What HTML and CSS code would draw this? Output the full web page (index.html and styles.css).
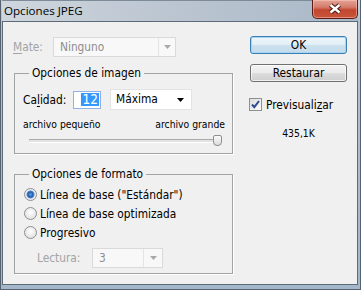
FILE: index.html
```html
<!DOCTYPE html>
<html lang="es">
<head>
    <meta charset="UTF-8">
    <title>Opciones JPEG</title>
    <link rel="stylesheet" href="styles.css">
</head>
<body>
<div class="window">
    <div class="titlebar">
        <span class="title">Opciones JPEG</span>
        <span class="close">
            <svg width="44" height="18" viewBox="0 0 44 18">
                <path d="M17.5 5 L26.5 12.5 M26.5 5 L17.5 12.5" stroke="#4b1a12" stroke-width="4.5" fill="none"/>
                <path d="M17.5 5 L26.5 12.5 M26.5 5 L17.5 12.5" stroke="#fff" stroke-width="2.4" fill="none"/>
            </svg>
        </span>
    </div>
    <div class="client">
        <div class="main">
            <div class="mate-row">
                <span class="mate-label disabled"><u>M</u>ate:</span>
                <div class="select select-off mate-select">
                    <span class="value">Ninguno</span>
                    <span class="drop">
                        <svg width="7" height="4" viewBox="0 0 7 4"><polygon points="0,0 7,0 3.5,4" fill="#a8a8a8"/></svg>
                    </span>
                </div>
            </div>

            <fieldset class="group">
                <legend>Opciones de imagen</legend>
                <div class="quality-row">
                    <span class="quality-label">Ca<u>l</u>idad:</span>
                    <span class="num-box"><span class="num-sel">12</span></span>
                    <div class="select quality-select">
                        <span class="value">Máxima</span>
                        <span class="drop">
                            <svg width="7" height="4" viewBox="0 0 7 4"><polygon points="0,0 7,0 3.5,4" fill="#000"/></svg>
                        </span>
                    </div>
                </div>
                <div class="size-labels">
                    <span>archivo pequeño</span>
                    <span>archivo grande</span>
                </div>
                <div class="slider">
                    <div class="track"></div>
                    <div class="thumb"></div>
                </div>
            </fieldset>

            <fieldset class="group format-group">
                <legend>Opciones de formato</legend>
                <div class="radio-row"><span class="radio checked"></span>Línea de base ("Estándar")</div>
                <div class="radio-row"><span class="radio"></span>Línea de base optimizada</div>
                <div class="radio-row"><span class="radio"></span>Progresivo</div>
                <div class="scan-row">
                    <span class="scan-label disabled">Lectura:</span>
                    <div class="select select-off scan-select">
                        <span class="value">3</span>
                        <span class="drop">
                            <svg width="7" height="4" viewBox="0 0 7 4"><polygon points="0,0 7,0 3.5,4" fill="#a8a8a8"/></svg>
                        </span>
                    </div>
                </div>
            </fieldset>
        </div>

        <div class="side">
            <button class="btn btn-default">OK</button>
            <button class="btn">Restaurar</button>
            <div class="check-row">
                <span class="checkbox">
                    <svg width="11" height="11" viewBox="0 0 11 11"><path d="M2 5.5 L4.3 8.2 L9 2" stroke="#2d4c8e" stroke-width="2" fill="none"/></svg>
                </span>
                <span>Previsuali<u>z</u>ar</span>
            </div>
            <div class="file-size">435,1K</div>
        </div>
    </div>
</div>
</body>
</html>
```

FILE: styles.css
```css
* {
    box-sizing: border-box;
}
body {
    margin: 0;
    font-family: "DejaVu Sans Condensed", "DejaVu Sans", sans-serif;
    font-stretch: condensed;
    font-size: 11.8px;
    color: #000;
}
u {
    text-decoration-thickness: 1px;
    text-underline-offset: 2px;
}
.window {
    width: 361px;
    height: 290px;
    display: flex;
    flex-direction: column;
    padding: 0 2px 4px 1px;
    border: 1px solid #56626f;
    border-top: 0;
    background: linear-gradient(to bottom, #c9d0d8 0, #b6c2ce 21px, #a3b6ca 100%);
}
.titlebar {
    height: 21px;
    display: flex;
    align-items: flex-start;
    background: linear-gradient(to right, #cfd6de 0, #bcc6d1 45%, #a9b8c8 100%);
    border-top: 1px solid #7d8a97;
}
.title {
    padding: 2px 0 0 2px;
    font-family: "Open Sans", "Noto Sans", sans-serif;
    font-stretch: normal;
    font-size: 11.6px;
    line-height: 16px;
}
.close {
    margin-left: auto;
    margin-top: -1px;
    width: 46px;
    height: 19px;
    display: flex;
    align-items: center;
    justify-content: center;
    border: 1px solid #5c1e14;
    border-top: 0;
    border-radius: 0 0 5px 5px;
    background: linear-gradient(to bottom, #e4a396 0, #d57b6c 40%, #c2472f 55%, #c9553a 100%);
    box-shadow: inset 0 0 0 1px rgba(255, 210, 200, 0.45);
}
.client {
    flex: 1;
    display: grid;
    grid-template-columns: 1fr 97px;
    padding-right: 10px;
    border: 1px solid #5d6a78;
    background: #f0f0f0;
}
.main {
    padding-left: 10px;
}
.disabled {
    color: #a3a3a3;
}

/* combo boxes */
.select {
    display: flex;
    height: 20px;
    border: 1px solid #dadada;
    background: #fff;
}
.select .value {
    flex: 1;
    padding-left: 6px;
    line-height: 18px;
}
.select .drop {
    width: 17px;
    display: flex;
    align-items: center;
    justify-content: center;
}
.select-off {
    background: #f8f8f8;
    color: #8d8d8d;
}
.select-off .drop {
    border-left: 1px solid #e4e4e4;
}

.mate-row {
    margin-top: 15px;
    display: flex;
    align-items: center;
}
.mate-label {
    width: 40px;
}
.mate-select {
    width: 123px;
}

/* group boxes */
.group {
    margin: 9px 0 0 1px;
    width: 219px;
    padding: 0 7px 7px 8px;
    border: 1px solid #a3a3a3;
    box-shadow: 1px 1px 0 #fff;
}
.group legend {
    margin-left: 6px;
    padding: 0 3px;
    line-height: 15px;
    background: #f0f0f0;
}
.quality-row {
    margin-top: 8px;
    height: 21px;
    display: flex;
    align-items: center;
}
.quality-label {
    width: 50px;
}
.num-box {
    width: 28px;
    height: 18px;
    margin-right: 9px;
    display: flex;
    align-items: center;
    justify-content: flex-end;
    padding-right: 1px;
    border: 1px solid #8db2e3;
    background: #fff;
}
.num-sel {
    padding: 0 1px 0 2px;
    font-size: 13.5px;
    line-height: 13px;
    color: #fff;
    background: #3399ff;
}
.quality-select {
    width: 82px;
    height: 21px;
    border-color: #e3e3e3;
}
.quality-select .value {
    padding-left: 5px;
}
.quality-select .drop {
    width: 22px;
}
.size-labels {
    margin-top: 8px;
    display: flex;
    justify-content: space-between;
    font-size: 10.3px;
    line-height: 13px;
}
.slider {
    margin: 4px 0 0 6px;
    height: 11px;
    display: flex;
    align-items: center;
}
.track {
    width: 189px;
    height: 4px;
    border-top: 1px solid #a9a9a9;
    border-bottom: 1px solid #fff;
    background: #e3e3e3;
}
.thumb {
    margin-left: -5px;
    width: 9px;
    height: 11px;
    border: 1px solid #8f8f8f;
    border-radius: 2px 2px 4px 4px;
    background: linear-gradient(to bottom, #fafafa, #dcdcdc);
}

.format-group {
    margin-top: 13px;
    padding-bottom: 5px;
}
.radio-row {
    margin-left: 1px;
    height: 19px;
    display: flex;
    align-items: center;
    gap: 3px;
}
.radio-row:first-of-type {
    margin-top: 3px;
}
.radio {
    width: 13px;
    height: 13px;
    border: 1px solid #8f8f8f;
    border-radius: 50%;
    background: radial-gradient(circle at 50% 40%, #ffffff 0, #e4e4e4 6px);
}
.radio.checked {
    background: radial-gradient(circle at 50% 50%, #6aa3e4 0, #1d5aa6 2.6px, #5f8fcf 3.6px, #e3ebf5 4.4px, #f4f4f4 6px);
}
.scan-row {
    margin-top: 6px;
    display: flex;
    align-items: center;
}
.scan-label {
    margin-left: 14px;
    width: 55px;
}
.scan-select {
    width: 71px;
}
.scan-select .drop {
    width: 19px;
}

/* right column */
.side {
    padding-top: 14px;
    display: flex;
    flex-direction: column;
}
.btn {
    width: 97px;
    height: 18px;
    padding: 0;
    font: inherit;
    line-height: 15px;
    color: #000;
    border: 1px solid #707070;
    border-radius: 3px;
    background: linear-gradient(to bottom, #f3f3f3 0, #ebebeb 50%, #dddddd 50%, #cfcfcf 100%);
    box-shadow: inset 0 0 0 1px rgba(255, 255, 255, 0.7);
}
.btn + .btn {
    margin-top: 10px;
}
.btn-default {
    border-color: #3c7fb1;
    background: linear-gradient(to bottom, #eef6fb 0, #e2eef6 50%, #cde1ef 50%, #c4dbec 100%);
    box-shadow: inset 0 0 0 1px #a6d4f2;
}
.check-row {
    margin: 16px 0 0 -1px;
    display: flex;
    align-items: center;
    gap: 4px;
    height: 13px;
}
.checkbox {
    width: 13px;
    height: 13px;
    display: flex;
    align-items: center;
    justify-content: center;
    border: 1px solid #8f8f8f;
    background: linear-gradient(135deg, #dcdcdc, #fdfdfd);
}
.file-size {
    margin-top: 16px;
    text-align: center;
    font-size: 10.3px;
    line-height: 13px;
}
```
